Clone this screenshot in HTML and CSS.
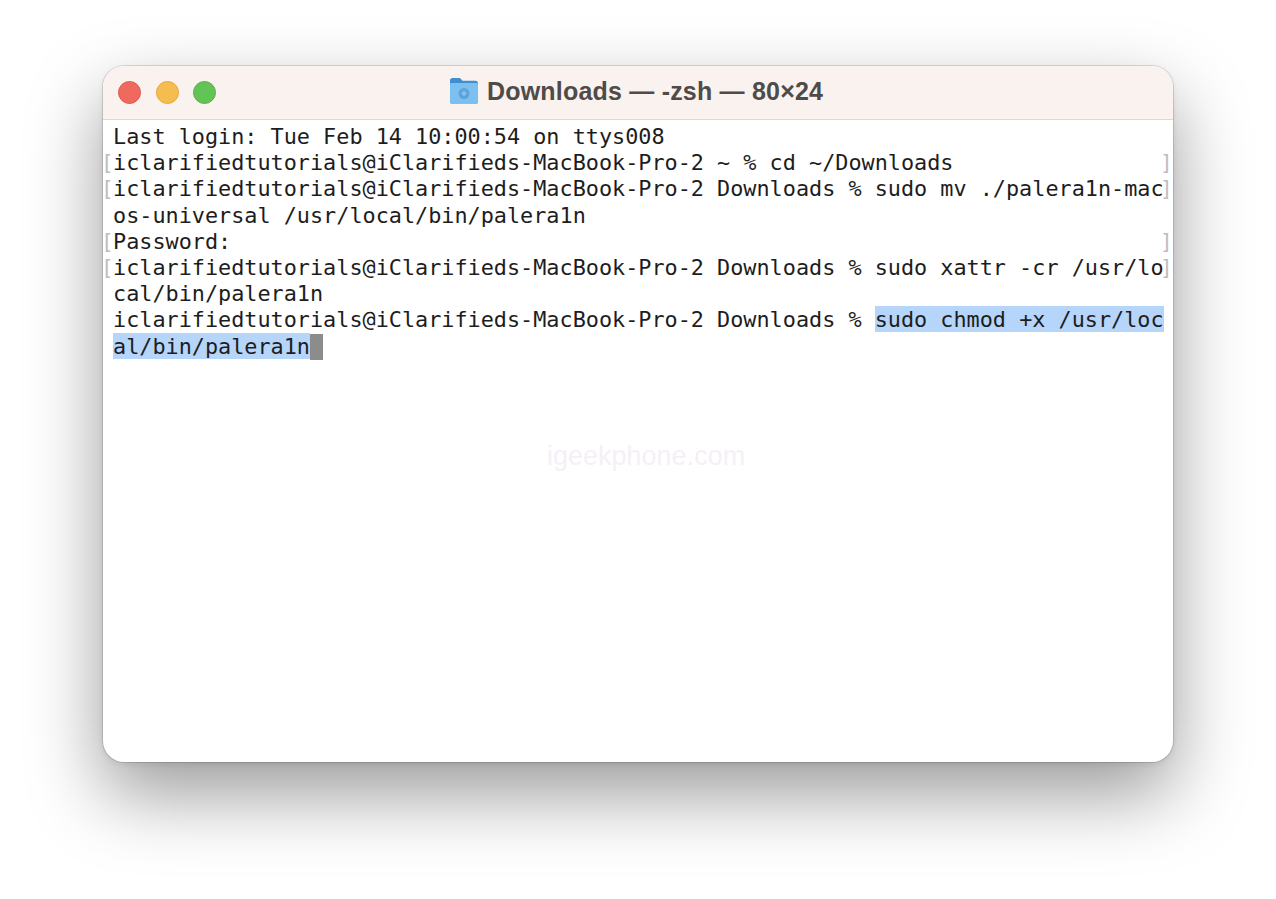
FILE: index.html
```html
<!DOCTYPE html>
<html lang="en">
<head>
<meta charset="utf-8">
<title>Downloads — -zsh — 80×24</title>
<link rel="stylesheet" href="styles.css">
</head>
<body>
<main class="window">
  <header class="titlebar">
    <div class="lights">
      <span class="light red"></span>
      <span class="light yellow"></span>
      <span class="light green"></span>
    </div>
    <div class="title">
      <svg class="folder" width="30" height="28" viewBox="0 0 30 28" aria-hidden="true">
        <path d="M1 3.500C1 2 2 1 3.500 1H10c1 0 1.500.4 2.200 1.200L13.500 3.700H26.500C28 3.700 29 4.700 29 6.200V24.500C29 26 28 27 26.500 27H3.500C2 27 1 26 1 24.500Z" fill="#3f8fd0"/>
        <path d="M1 7.500C1 6.700 1.700 6 2.500 6H27.500C28.300 6 29 6.700 29 7.500V24.500C29 26 28 27 26.500 27H3.500C2 27 1 26 1 24.500Z" fill="#7cc0f2"/>
        <circle cx="15" cy="16.500" r="5.500" fill="#5da3dc"/>
        <circle cx="15" cy="16.500" r="2.200" fill="#86c2ee"/>
      </svg>
      <span>Downloads — -zsh — 80×24</span>
    </div>
  </header>
  <section class="terminal">
    <div class="line">Last login: Tue Feb 14 10:00:54 on ttys008</div>
    <div class="line mark mark-end">iclarifiedtutorials@iClarifieds-MacBook-Pro-2 ~ % cd ~/Downloads</div>
    <div class="line mark mark-end">iclarifiedtutorials@iClarifieds-MacBook-Pro-2 Downloads % sudo mv ./palera1n-mac</div>
    <div class="line">os-universal /usr/local/bin/palera1n</div>
    <div class="line mark mark-end">Password:</div>
    <div class="line mark mark-end">iclarifiedtutorials@iClarifieds-MacBook-Pro-2 Downloads % sudo xattr -cr /usr/lo</div>
    <div class="line">cal/bin/palera1n</div>
    <div class="line">iclarifiedtutorials@iClarifieds-MacBook-Pro-2 Downloads % <span class="sel">sudo chmod +x /usr/loc</span></div>
    <div class="line"><span class="sel">al/bin/palera1n</span><span class="cursor"> </span></div>
    <div class="watermark">igeekphone.com</div>
  </section>
</main>
</body>
</html>
```
FILE: styles.css
```css
html, body {
  margin: 0;
  height: 100%;
  background: #fff;
}
body {
  padding: 66px 103px 0;
  box-sizing: border-box;
  overflow: hidden;
}
.window {
  width: 1070px;
  height: 696px;
  border-radius: 21px;
  background: #fff;
  overflow: hidden;
  position: relative;
  display: flex;
  flex-direction: column;
  box-sizing: border-box;
  box-shadow: 0 0 0 1px rgba(0, 0, 0, 0.12), 0 2px 6px rgba(0, 0, 0, 0.08), 0 32px 76px rgba(0, 0, 0, 0.4);
}
.titlebar {
  height: 54px;
  flex: none;
  box-sizing: border-box;
  background: #faf2ee;
  border-bottom: 1px solid #dcd8d5;
  display: flex;
  align-items: center;
  position: relative;
  padding-left: 15px;
}
.lights {
  display: flex;
  gap: 14.500px;
}
.light {
  width: 23px;
  height: 23px;
  border-radius: 50%;
  box-sizing: border-box;
}
.red { background: #ee6a5f; border: 1px solid #dc5a50; }
.yellow { background: #f5bd4f; border: 1px solid #e1a73c; }
.green { background: #61c454; border: 1px solid #55b348; }
.title {
  position: absolute;
  left: 346px;
  top: 10px;
  display: flex;
  align-items: center;
  gap: 8px;
  font: bold 25px/30px "Liberation Sans", Arial, sans-serif;
  letter-spacing: 0.2px;
  color: #4f4b49;
  white-space: nowrap;
}
.terminal {
  flex: 1;
  position: relative;
  padding: 4px 0 0 10px;
  font: 21.820px/26.200px "DejaVu Sans Mono", "Liberation Mono", monospace;
  color: #1d1d1d;
}
.line {
  height: 26.200px;
  white-space: pre;
  position: relative;
}
.mark::before, .mark-end::after {
  position: absolute;
  top: 3px;
  font-size: 21px;
  line-height: 20px;
  color: #bdbdbd;
}
.mark::before {
  content: "[";
  left: -12px;
}
.mark-end::after {
  content: "]";
  left: 1047px;
}
.sel {
  background: #b5d5fb;
  box-shadow: 0 -1px 0 #b5d5fb;
}
.cursor {
  background: #8c8c8c;
  box-shadow: 0 1px 0 #8c8c8c;
}
.watermark {
  position: absolute;
  left: 444px;
  top: 319px;
  font: 27px/34px "Liberation Sans", Arial, sans-serif;
  color: #f7eff8;
  white-space: nowrap;
}
```
